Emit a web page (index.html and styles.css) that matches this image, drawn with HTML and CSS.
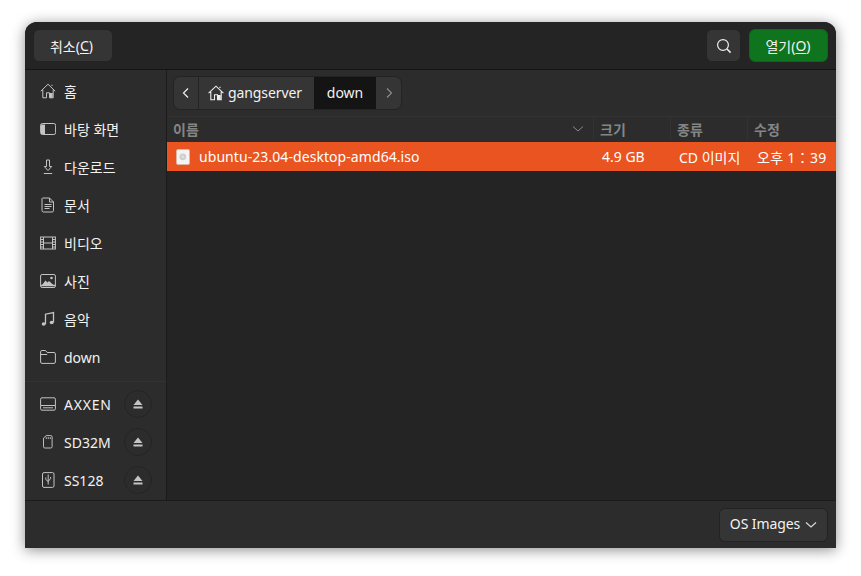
FILE: index.html
```html
<!DOCTYPE html>
<html lang="ko">
<head>
<meta charset="utf-8">
<title>열기</title>
<link rel="stylesheet" href="styles.css">
</head>
<body>
<div class="window">
  <header class="titlebar">
    <button class="btn cancel">취소(<u>C</u>)</button>
    <div class="spacer"></div>
    <button class="btn search" aria-label="검색">
      <svg width="16" height="16" viewBox="0 0 16 16" fill="none" stroke="#eeeeec" stroke-width="1.2"><circle cx="7" cy="7" r="5.4"/><path d="M11 11l3.6 3.6" stroke-width="1.5"/></svg>
    </button>
    <button class="btn open">열기(<u>O</u>)</button>
  </header>
  <div class="main">
    <nav class="sidebar">
      <div class="places">
        <div class="item"><svg class="ico" viewBox="0 0 16 16" fill="none" stroke="#c4c4c4"><path d="M.8 8.200L8 1.200l7.200 7M2.800 6.800v8h3.700v-5h3v5h3.700v-8M12 3V1.800"/><path d="M9.500 10h3.200v4.800H9.500z" fill="#c4c4c4" stroke="none"/></svg><span>홈</span></div>
        <div class="item"><svg class="ico" viewBox="0 0 16 16" fill="none" stroke="#c4c4c4"><rect x=".6" y="2.500" width="15" height="11" rx="1.800"/><path d="M1 3.500h4v9.500H1z" fill="#c4c4c4" stroke="none"/></svg><span>바탕 화면</span></div>
        <div class="item"><svg class="ico" viewBox="0 0 16 16" fill="none" stroke="#c4c4c4"><path d="M6.500 1h3v6.500h2.200L8 11.600 4.300 7.500h2.200zM3.800 14.500h8.400"/></svg><span>다운로드</span></div>
        <div class="item"><svg class="ico" viewBox="0 0 16 16" fill="none" stroke="#c4c4c4"><path d="M2.500 1h7l4 4v8.500a1.500 1.500 0 0 1-1.500 1.500H3.500a1.500 1.500 0 0 1-1.500-1.500V1.500zM9.500 1v4h4M4.500 7.500h7M4.500 9.500h7M4.500 11.500h5"/></svg><span>문서</span></div>
        <div class="item"><svg class="ico" viewBox="0 0 16 16" fill="none" stroke="#c4c4c4"><rect x=".6" y="2" width="14.800" height="12"/><path d="M3.500 2v12M12.500 2v12M3.500 8h9M.6 4.500h3M.6 7h3M.6 9.500h3M.6 12h3M12.500 4.500h3M12.500 7h3M12.500 9.500h3M12.500 12h3"/></svg><span>비디오</span></div>
        <div class="item"><svg class="ico" viewBox="0 0 16 16" fill="none" stroke="#c4c4c4"><rect x=".6" y="1.500" width="14.800" height="13" rx="1.500"/><path d="M2 12l3.500-4.500 2 2 1.500-1.500 4.500 4z" fill="#c4c4c4" stroke="none"/><circle cx="11.500" cy="5" r="1.300" fill="#c4c4c4" stroke="none"/><path d="M1 12.500h14" stroke-width="1.500"/></svg><span>사진</span></div>
        <div class="item"><svg class="ico" viewBox="0 0 16 16" fill="none" stroke="#c4c4c4"><path d="M5.500 13V3.200l8-1.700v9.800" stroke-width="1.300"/><ellipse cx="3.700" cy="13" rx="2" ry="1.700" fill="#c4c4c4" stroke="none"/><ellipse cx="11.700" cy="11.500" rx="2" ry="1.700" fill="#c4c4c4" stroke="none"/></svg><span>음악</span></div>
        <div class="item"><svg class="ico" viewBox="0 0 16 16" fill="none" stroke="#c4c4c4"><path d="M.6 13V2.800c0-.8.5-1.300 1.300-1.300h3.600L7.200 3.500h6.900c.8 0 1.300.5 1.300 1.300V13c0 .8-.5 1.400-1.300 1.400H1.900C1.100 14.400.6 13.800.6 13zM.6 5.500h6.600"/></svg><span>down</span></div>
      </div>
      <div class="devices">
        <div class="item"><svg class="ico" viewBox="0 0 16 16" fill="none" stroke="#c4c4c4"><path d="M.6 9.500V3.200c0-.9.5-1.400 1.400-1.400h12c.9 0 1.400.5 1.400 1.400v6.300M.6 9.500v3.300c0 .9.5 1.400 1.400 1.400h12c.9 0 1.400-.5 1.400-1.400V9.500zM3 11.800h10" /></svg><span class="wide">AXXEN</span><button class="eject" aria-label="꺼내기"><svg width="10" height="10" viewBox="0 0 10 10" fill="#c4c4c4"><path d="M5 .5L9.500 6H.5zM.5 7.500h9V9.500h-9z"/></svg></button></div>
        <div class="item"><svg class="ico" viewBox="0 0 16 16" fill="none" stroke="#c4c4c4"><path d="M3.500 4v9.700c0 .8.500 1.300 1.300 1.300h6c.8 0 1.300-.5 1.300-1.300V2.500c0-.8-.5-1.300-1.300-1.300H6.300zM6.300 3v2M8.300 3v2M10.300 3v2" transform="translate(0 .5) scale(1 .9)"/></svg><span>SD32M</span><button class="eject" aria-label="꺼내기"><svg width="10" height="10" viewBox="0 0 10 10" fill="#c4c4c4"><path d="M5 .5L9.500 6H.5zM.5 7.500h9V9.500h-9z"/></svg></button></div>
        <div class="item"><svg class="ico" viewBox="0 0 16 16" fill="none" stroke="#c4c4c4"><rect x="2.500" y=".6" width="11.500" height="14.800" rx="1.500"/><path d="M8.200 2.500v10M5.800 5.500v2l2.400 2 2.400-3V5"/></svg><span>SS128</span><button class="eject" aria-label="꺼내기"><svg width="10" height="10" viewBox="0 0 10 10" fill="#c4c4c4"><path d="M5 .5L9.500 6H.5zM.5 7.500h9V9.500h-9z"/></svg></button></div>
      </div>
    </nav>
    <section class="content">
      <div class="pathrow">
        <div class="pathbar">
          <button class="seg nav"><svg width="10" height="12" viewBox="0 0 10 12" fill="none" stroke="#eeeeec" stroke-width="1.200"><path d="M7 1.500L2.500 6 7 10.500"/></svg></button>
          <button class="seg crumb"><svg width="16" height="16" viewBox="0 0 16 16" fill="none" stroke="#eeeeec" stroke-width="1.100"><path d="M.6 8.200L8 1.200l7.400 7M2.800 6.800v8h3.700v-5h3v5h3.700v-8M12 3V1.800"/><path d="M9.500 10h3.200v4.800H9.500z" fill="#eeeeec" stroke="none"/></svg><span class="crumb-label">gangserver</span></button>
          <button class="seg current"><span class="crumb-label">down</span></button>
          <button class="seg nav last"><svg width="10" height="12" viewBox="0 0 10 12" fill="none" stroke="#8a8a8a" stroke-width="1.200"><path d="M3 1.500L7.500 6 3 10.500"/></svg></button>
        </div>
      </div>
      <div class="cols">
        <div class="col first"><span>이름</span><svg width="12" height="8" viewBox="0 0 12 8" fill="none" stroke="#8a8a8a"><path d="M1 1.500l5 4.500 5-4.500"/></svg></div>
        <div class="col">크기</div>
        <div class="col">종류</div>
        <div class="col">수정</div>
      </div>
      <div class="row">
        <div class="cell name"><svg width="14" height="16" viewBox="0 0 14 16"><rect x=".5" y=".5" width="13" height="15" rx="1.500" fill="#f4f4f4" stroke="#d8b8a8"/><circle cx="6.800" cy="7.800" r="3.400" fill="#cfcfcf"/><circle cx="6.800" cy="7.800" r="1.200" fill="#e2e2e2"/></svg><span class="file">ubuntu-23.04-desktop-amd64.iso</span></div>
        <div class="cell size">4.9 GB</div>
        <div class="cell type">CD 이미지</div>
        <div class="cell time">오후 1：39</div>
      </div>
    </section>
  </div>
  <footer class="footer">
    <button class="btn filter"><span class="filter-label">OS Images</span><svg width="12" height="8" viewBox="0 0 12 8" fill="none" stroke="#dcdcdc" stroke-width="1.100"><path d="M1 1.500l5 4.500 5-4.500"/></svg></button>
  </footer>
</div>
</body>
</html>
```
FILE: styles.css
```css
* { box-sizing: border-box; }
html, body { margin: 0; height: 100%; }
body {
  background: #fff;
  padding: 22px 25px 28px;
  font-family: "Noto Sans", "Noto Sans CJK KR", sans-serif;
  font-size: 14px;
  color: #f2f2f2;
  overflow: hidden;
}
.window {
  width: 811px;
  height: 526px;
  display: flex;
  flex-direction: column;
  background: #2c2c2c;
  border-radius: 12px 12px 0 0;
  overflow: hidden;
  box-shadow: 0 2px 14px rgba(0, 0, 0, .45);
}
button { font: inherit; color: inherit; border: 0; padding: 0; background: none; }
u { text-underline-offset: 2px; }
.titlebar {
  height: 48px;
  flex: none;
  display: flex;
  align-items: center;
  gap: 8px;
  padding: 0 8px;
  background: #242424;
  border-bottom: 1px solid #141414;
}
.spacer { flex: 1; }
.btn {
  height: 33px;
  border-radius: 6px;
  background: #353535;
  border: 1px solid #232323;
  display: flex;
  align-items: center;
  justify-content: center;
}
.cancel { width: 80px; padding-right: 3px; }
.search { width: 35px; }
.open { width: 79px; padding-right: 1px; background: #0e741e; border-color: #0c661b; }
.main { flex: 1; display: flex; min-height: 0; }
.sidebar {
  width: 142px;
  flex: none;
  background: #2c2c2c;
  border-right: 1px solid #1b1b1b;
  display: flex;
  flex-direction: column;
  padding: 2px 0 0;
}
.places { padding-bottom: 5px; border-bottom: 1px solid #333; }
.devices { padding-top: 3px; }
.item {
  height: 38px;
  display: flex;
  align-items: center;
  padding-left: 15px;
  gap: 8px;
}
.item span { flex: 1; white-space: nowrap; }
.item .wide { letter-spacing: .8px; }
.ico { width: 16px; height: 16px; flex: none; }
.eject {
  width: 28px;
  height: 28px;
  border-radius: 50%;
  border: 1px solid #242424;
  margin-right: 14px;
  display: flex;
  align-items: center;
  justify-content: center;
}
.content { flex: 1; background: #242424; display: flex; flex-direction: column; min-width: 0; }
.pathrow { height: 46px; flex: none; padding: 6px 6px 0; background: #2c2c2c; }
.pathbar {
  display: inline-flex;
  height: 34px;
  border: 1px solid #232323;
  border-radius: 7px;
  overflow: hidden;
  background: #353535;
}
.seg { display: flex; align-items: center; justify-content: center; height: 100%; }
.crumb-label { padding-bottom: 2px; }
.nav { width: 25px; border-right: 1px solid #232323; }
.nav.last { border-right: 0; }
.crumb { width: 115px; gap: 4px; justify-content: flex-start; padding-left: 9px; letter-spacing: -.1px; }
.current { width: 62px; background: #141414; }
.cols {
  height: 26px;
  flex: none;
  display: grid;
  grid-template-columns: 427px 77px 77px 1fr;
  background: #2c2c2c;
  border-top: 1px solid #333;
  font-weight: 700;
  font-size: 14px;
  color: #858585;
  padding-bottom: 2px;
}
.col {
  display: flex;
  align-items: center;
  padding-left: 6px;
  border-right: 1px solid #333;
}
.col:last-child { border-right: 0; }
.col.first { justify-content: space-between; padding-right: 9px; }
.row {
  height: 29px;
  flex: none;
  display: grid;
  grid-template-columns: 427px 77px 77px 1fr;
  align-items: center;
  background: #e95420;
  color: #fff;
  white-space: nowrap;
}
.cell { padding-left: 8px; }
.cell.name { display: flex; align-items: center; gap: 9px; padding-left: 9px; }
.file { letter-spacing: .07px; }
.cell.type { padding-left: 8px; }
.cell.time { padding-left: 9px; letter-spacing: .3px; }
.footer {
  height: 48px;
  flex: none;
  display: flex;
  justify-content: flex-end;
  align-items: center;
  padding: 0 8px;
  background: #2c2c2c;
  border-top: 1px solid #1b1b1b;
}
.filter { width: 109px; height: 34px; gap: 5px; }
.filter-label { padding-bottom: 2px; letter-spacing: -.1px; }
```
